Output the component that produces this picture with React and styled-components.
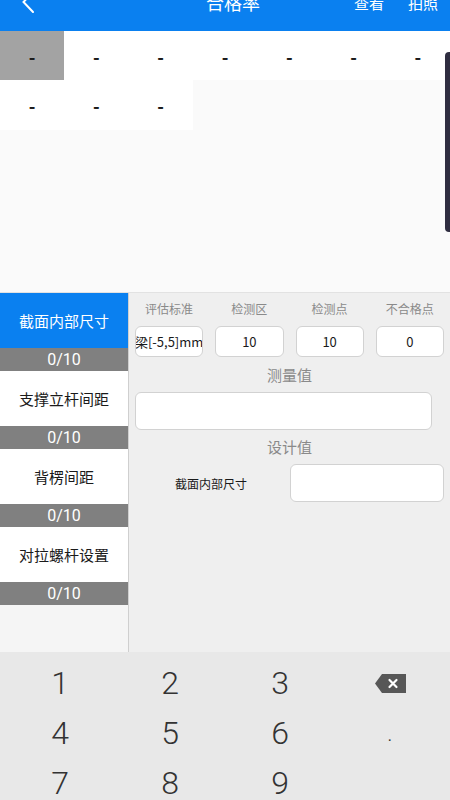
import React from "react"
import styled, { createGlobalStyle } from "styled-components"

const GlobalStyle = createGlobalStyle`
  html, body {
    margin: 0;
    padding: 0;
    background: #fafafa;
  }
  * {
    box-sizing: border-box;
  }
  body {
    font-family: "Noto Sans CJK SC", "Noto Sans", sans-serif;
  }
`

const Screen = styled.div`
  width: 450px;
  height: 800px;
  display: flex;
  flex-direction: column;
  overflow: hidden;
  position: relative;
`

const Header = styled.header`
  height: 31px;
  flex: none;
  background: #0a80f0;
  overflow: hidden;
`

const NavBar = styled.div`
  height: 44px;
  margin-top: -20px;
  display: flex;
  align-items: center;
  padding: 0 12px 0 22px;
  color: #fff;
`

const BackButton = styled.div`
  width: 40px;
  display: flex;
  align-items: center;
`

const Title = styled.div`
  flex: 1;
  text-align: center;
  font-size: 18px;
  padding-left: 50px;
`

const NavAction = styled.div`
  font-size: 15px;
  margin-left: ${props => props.gap || "0"};
`

const GridArea = styled.section`
  height: 261px;
  flex: none;
  background: #fafafa;
  position: relative;
`

const CellGrid = styled.div`
  display: grid;
  grid-template-columns: repeat(7, 1fr);
`

const Cell = styled.div`
  height: ${props => (props.second ? "50px" : "49px")};
  display: flex;
  align-items: center;
  justify-content: center;
  background: ${props => (props.active ? "#a3a3a3" : "#fff")};
  color: #1a1a1a;
  font-size: 18px;
  font-weight: 700;
`

const Handle = styled.div`
  position: absolute;
  right: 0;
  top: 21px;
  width: 5px;
  height: 180px;
  border-radius: 4px 0 0 4px;
  background: #2f2d40;
`

const Bottom = styled.section`
  height: 360px;
  flex: none;
  display: flex;
  border-top: 1px solid #e2e2e2;
`

const Sidebar = styled.nav`
  width: 129px;
  flex: none;
  background: #f5f5f5;
  border-right: 1px solid #cfcfcf;
`

const SideItem = styled.div`
  height: 55px;
  display: flex;
  align-items: center;
  justify-content: center;
  font-size: 15px;
  background: ${props => (props.active ? "#0a80f0" : "#fff")};
  color: ${props => (props.active ? "#fff" : "#1a1a1a")};
`

const SideCount = styled.div`
  height: 23px;
  display: flex;
  align-items: center;
  justify-content: center;
  font-family: Roboto, "Noto Sans", sans-serif;
  font-size: 16px;
  background: #808080;
  color: #fff;
`

const Panel = styled.div`
  flex: 1;
  background: #efefef;
  padding: 6px 6px 0 6px;
`

const StatGrid = styled.div`
  display: grid;
  grid-template-columns: repeat(4, 1fr);
  column-gap: 12px;
  row-gap: 7px;
`

const StatLabel = styled.div`
  text-align: center;
  font-size: 12px;
  line-height: 20px;
  color: #8a8a8a;
`

const Box = styled.div`
  height: ${props => props.h || "31px"};
  background: #fff;
  border: 1px solid #d2d2d2;
  border-radius: 6px;
  display: flex;
  align-items: center;
  justify-content: center;
  font-size: 13px;
  color: #1a1a1a;
  white-space: nowrap;
  overflow: hidden;
  margin-right: ${props => props.mr || "0"};
`

const SectionTitle = styled.div`
  text-align: center;
  font-size: 15px;
  line-height: 22px;
  color: #8a8a8a;
  margin: ${props => props.m || "7px 0 6px"};
`

const DesignRow = styled.div`
  display: grid;
  grid-template-columns: 1fr 154px;
  align-items: center;
  column-gap: 3px;
`

const DesignLabel = styled.div`
  text-align: center;
  font-size: 12px;
  color: #1a1a1a;
`

const Keyboard = styled.section`
  flex: 1;
  background: #e8e8e8;
  padding: 6px 5px 0;
  display: grid;
  grid-template-columns: repeat(4, 110px);
  grid-auto-rows: 50px;
`

const Key = styled.div`
  display: flex;
  align-items: center;
  justify-content: center;
  font-family: Roboto, "Noto Sans", sans-serif;
  font-weight: 300;
  font-size: ${props => (props.small ? "22px" : "32px")};
  color: #333;
`

const BackIcon = () => (
  <svg width="12" height="22" viewBox="0 0 12 22" fill="none">
    <path d="M11 1 L1.5 11 L11 21" stroke="#fff" strokeWidth="2" strokeLinecap="round" />
  </svg>
)

const DeleteIcon = () => (
  <svg width="31" height="19" viewBox="0 0 31 19">
    <path d="M7 0 H31 V19 H7 L0 9.5 Z" fill="#575757" />
    <path d="M14.5 6 L21.5 13 M21.5 6 L14.5 13" stroke="#fff" strokeWidth="2.2" strokeLinecap="round" />
  </svg>
)

const firstRow = Array.from({ length: 7 })
const secondRow = Array.from({ length: 3 })

const sideItems = ["截面内部尺寸", "支撑立杆间距", "背楞间距", "对拉螺杆设置"]

const stats = [
  { label: "评估标准", value: "梁[-5,5]mm" },
  { label: "检测区", value: "10" },
  { label: "检测点", value: "10" },
  { label: "不合格点", value: "0" },
]

const keys = ["1", "2", "3", "del", "4", "5", "6", ".", "7", "8", "9", ""]

export default function App() {
  return (
    <Screen>
      <GlobalStyle />
      <Header>
        <NavBar>
          <BackButton>
            <BackIcon />
          </BackButton>
          <Title>合格率</Title>
          <NavAction>查看</NavAction>
          <NavAction gap="24px">拍照</NavAction>
        </NavBar>
      </Header>

      <GridArea>
        <CellGrid>
          {firstRow.map((_, i) => (
            <Cell key={i} active={i === 0}>-</Cell>
          ))}
          {secondRow.map((_, i) => (
            <Cell key={"b" + i} second>-</Cell>
          ))}
        </CellGrid>
        <Handle />
      </GridArea>

      <Bottom>
        <Sidebar>
          {sideItems.map((name, i) => (
            <React.Fragment key={name}>
              <SideItem active={i === 0}>{name}</SideItem>
              <SideCount>0/10</SideCount>
            </React.Fragment>
          ))}
        </Sidebar>
        <Panel>
          <StatGrid>
            {stats.map(s => (
              <StatLabel key={s.label}>{s.label}</StatLabel>
            ))}
            {stats.map(s => (
              <Box key={s.label + "v"}>{s.value}</Box>
            ))}
          </StatGrid>
          <SectionTitle>测量值</SectionTitle>
          <Box h="38px" mr="12px" />
          <SectionTitle m="6px 0 6px">设计值</SectionTitle>
          <DesignRow>
            <DesignLabel>截面内部尺寸</DesignLabel>
            <Box h="38px" />
          </DesignRow>
        </Panel>
      </Bottom>

      <Keyboard>
        {keys.map((k, i) => (
          <Key key={i} small={k === "."}>
            {k === "del" ? <DeleteIcon /> : k}
          </Key>
        ))}
      </Keyboard>
    </Screen>
  )
}
